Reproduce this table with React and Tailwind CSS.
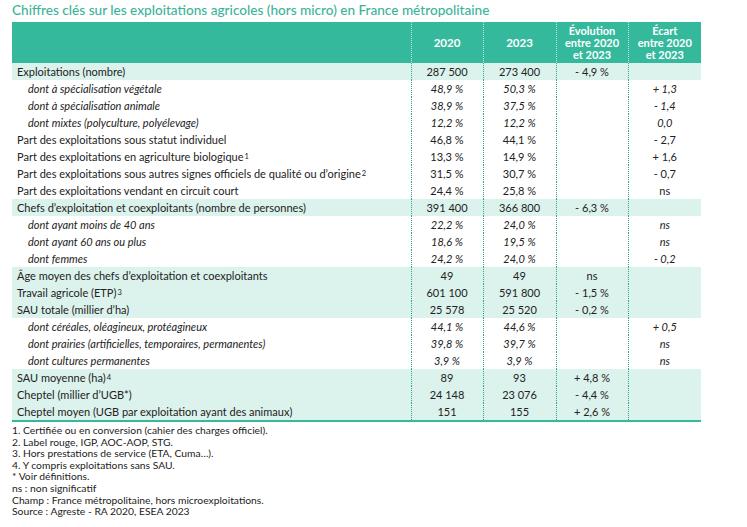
const rows = [
  { label: "Exploitations (nombre)", v: ["287 500", "273 400", "- 4,9 %", ""], hl: true },
  { label: "dont à spécialisation végétale", v: ["48,9 %", "50,3 %", "", "+ 1,3"], sub: true },
  { label: "dont à spécialisation animale", v: ["38,9 %", "37,5 %", "", "- 1,4"], sub: true },
  { label: "dont mixtes (polyculture, polyélevage)", v: ["12,2 %", "12,2 %", "", "0,0"], sub: true },
  { label: "Part des exploitations sous statut individuel", v: ["46,8 %", "44,1 %", "", "- 2,7"] },
  { label: "Part des exploitations en agriculture biologique", sup: "1", v: ["13,3 %", "14,9 %", "", "+ 1,6"] },
  { label: "Part des exploitations sous autres signes officiels de qualité ou d’origine", sup: "2", v: ["31,5 %", "30,7 %", "", "- 0,7"] },
  { label: "Part des exploitations vendant en circuit court", v: ["24,4 %", "25,8 %", "", "ns"] },
  { label: "Chefs d’exploitation et coexploitants (nombre de personnes)", v: ["391 400", "366 800", "- 6,3 %", ""], hl: true },
  { label: "dont ayant moins de 40 ans", v: ["22,2 %", "24,0 %", "", "ns"], sub: true },
  { label: "dont ayant 60 ans ou plus", v: ["18,6 %", "19,5 %", "", "ns"], sub: true },
  { label: "dont femmes", v: ["24,2 %", "24,0 %", "", "- 0,2"], sub: true },
  { label: "Âge moyen des chefs d’exploitation et coexploitants", v: ["49", "49", "ns", ""], hl: true },
  { label: "Travail agricole (ETP)", sup: "3", v: ["601 100", "591 800", "- 1,5 %", ""], hl: true },
  { label: "SAU totale (millier d’ha)", v: ["25 578", "25 520", "- 0,2 %", ""], hl: true },
  { label: "dont céréales, oléagineux, protéagineux", v: ["44,1 %", "44,6 %", "", "+ 0,5"], sub: true },
  { label: "dont prairies (artificielles, temporaires, permanentes)", v: ["39,8 %", "39,7 %", "", "ns"], sub: true },
  { label: "dont cultures permanentes", v: ["3,9 %", "3,9 %", "", "ns"], sub: true },
  { label: "SAU moyenne (ha)", sup: "4", v: ["89", "93", "+ 4,8 %", ""], hl: true },
  { label: "Cheptel (millier d’UGB*)", v: ["24 148", "23 076", "- 4,4 %", ""], hl: true },
  { label: "Cheptel moyen (UGB par exploitation ayant des animaux)", v: ["151", "155", "+ 2,6 %", ""], hl: true },
];

const notes = [
  "1. Certifiée ou en conversion (cahier des charges officiel).",
  "2. Label rouge, IGP, AOC-AOP, STG.",
  "3. Hors prestations de service (ETA, Cuma…).",
  "4. Y compris exploitations sans SAU.",
  "* Voir définitions.",
  "ns : non significatif",
  "Champ : France métropolitaine, hors microexploitations.",
  "Source : Agreste - RA 2020, ESEA 2023",
];

export default function App() {
  return (
    <div className="w-[747px] h-[527px] bg-white pl-[12px] pt-[2px] text-[#222]" style={{ fontFamily: "Lato, 'Open Sans', sans-serif" }}>
      <h1 className="text-[13.6px] leading-[17px] text-[#3bb49a] font-medium">
        Chiffres clés sur les exploitations agricoles (hors micro) en France métropolitaine
      </h1>
      <table className="mt-[3px] w-[689px] border-collapse text-[11px] leading-[17px]">
        <thead>
          <tr className="bg-[#35b99c] text-white font-bold h-[41px]">
            <th className="w-[399px]"></th>
            <th className="w-[72px] border-l border-dotted border-white/70 align-middle text-[11.5px]">2020</th>
            <th className="w-[73px] border-l border-dotted border-white/70 align-middle text-[11.5px]">2023</th>
            <th className="w-[72px] border-l border-dotted border-white/70 leading-[12px] align-middle">Évolution<br />entre 2020<br />et 2023</th>
            <th className="w-[73px] border-l border-dotted border-white/70 leading-[12px] align-middle">Écart<br />entre 2020<br />et 2023</th>
          </tr>
        </thead>
        <tbody className="border-b-2 border-[#35b99c]">
          {rows.map((r, i) => (
            <tr key={i} className={`h-[17px] ${r.hl ? "bg-[#dcf2ec]" : ""} ${r.sub ? "italic" : ""}`}>
              <td className={`p-0 whitespace-nowrap ${r.sub ? "pl-[16px]" : "pl-[5px]"}`}>
                {r.label}
                {r.sup && <span className="text-[7.5px] align-[2px] ml-[1px]">{r.sup}</span>}
              </td>
              {r.v.map((val, j) => (
                <td key={j} className="p-0 text-center border-l border-dotted border-[#2aa88a]">{val}</td>
              ))}
            </tr>
          ))}
        </tbody>
      </table>
      <div className="mt-[3px] text-[10.3px] leading-[11.6px] text-[#222]">
        {notes.map((n, i) => (
          <div key={i}>{n}</div>
        ))}
      </div>
    </div>
  );
}
